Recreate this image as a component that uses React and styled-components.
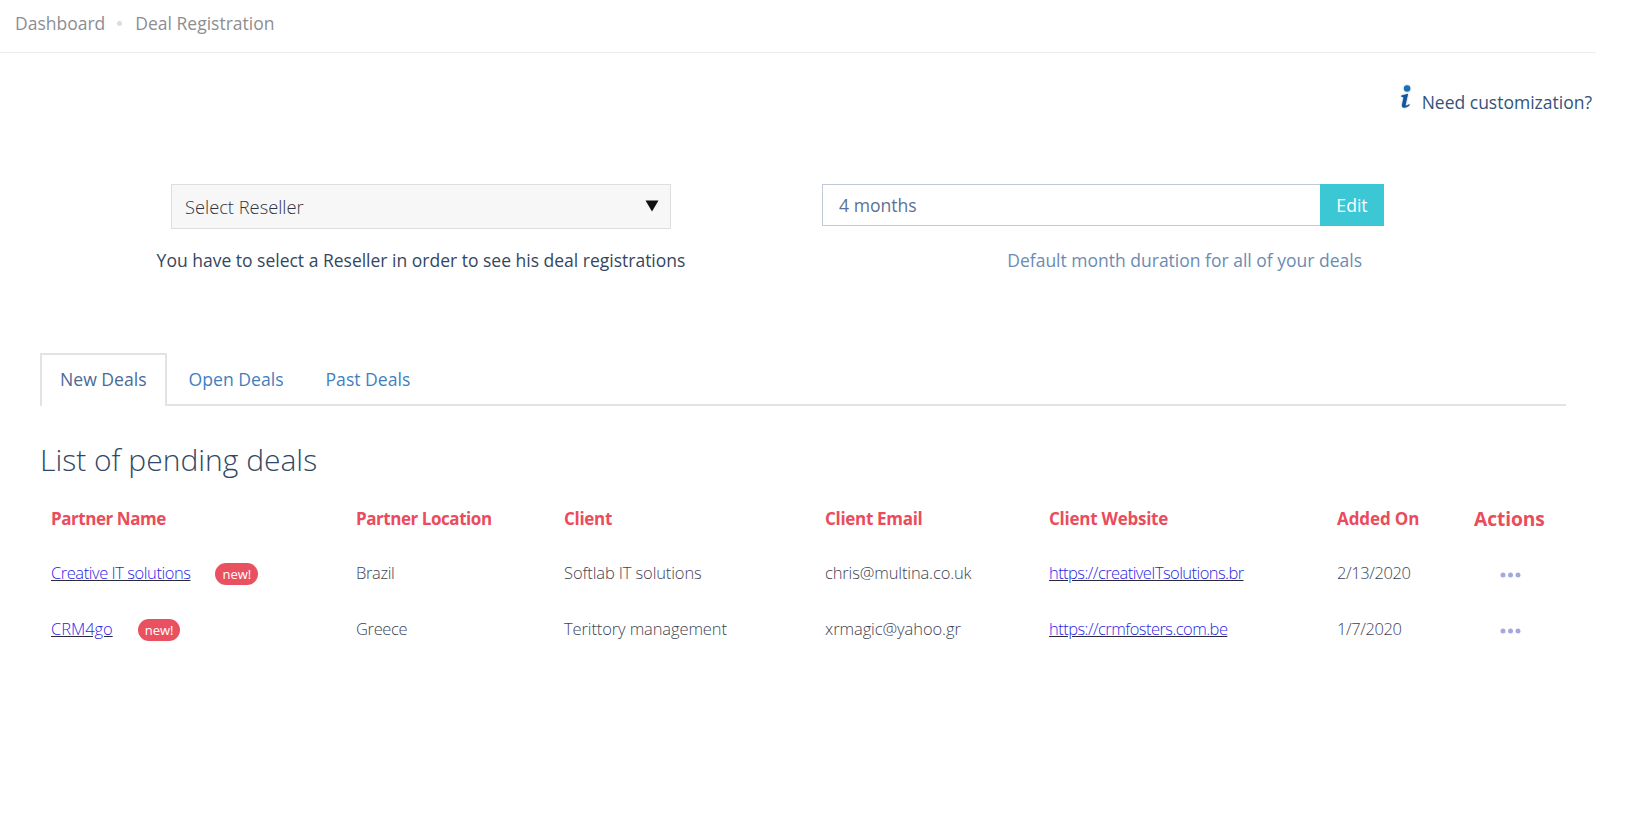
import React from "react";
import styled, { createGlobalStyle } from "styled-components";

const Global = createGlobalStyle`
  html, body { margin: 0; padding: 0; background: #fff; }
  body { font-family: "Open Sans", "Noto Sans", sans-serif; color: #3f4a5f; overflow: hidden; }
`;

const Page = styled.div`
  width: 1596px;
  height: 822px;
`;

const Breadcrumb = styled.nav`
  height: 53px;
  box-sizing: border-box;
  border-bottom: 1px solid #e9edf2;
  display: flex;
  align-items: center;
  padding: 0 0 6px 15px;
  font-size: 17.5px;
  color: #8d8d92;
`;

const Dot = styled.span`
  width: 5px;
  height: 5px;
  border-radius: 50%;
  background: #dcdcdf;
  margin: 1px 13px 0 12px;
`;

const HelpRow = styled.div`
  display: flex;
  justify-content: flex-end;
  align-items: flex-end;
  height: 61px;
  margin-right: 4px;
  font-size: 17.5px;
  color: #34527c;
  gap: 9px;
`;

const HelpText = styled.span`
  line-height: 24px;
`;

const InfoIcon = styled.svg`
  width: 15px;
  height: 28px;
  margin-bottom: 3px;
  filter: drop-shadow(0 0 1px rgba(90, 100, 120, 0.45));
`;

const Controls = styled.section`
  display: flex;
  margin-top: 70px;
  height: 169px;
`;

const ResellerCol = styled.div`
  margin-left: 156px;
  width: 530px;
  display: flex;
  flex-direction: column;
  align-items: center;
`;

const SelectBox = styled.div`
  width: 500px;
  height: 45px;
  box-sizing: border-box;
  background: #f7f7f7;
  border: 1px solid #dedede;
  display: flex;
  align-items: center;
  justify-content: space-between;
  padding: 0 11px 0 13px;
  font-size: 18.3px;
  font-weight: 300;
  color: #2f3542;
`;

const Caret = styled.svg`
  width: 14px;
  height: 12px;
  margin-bottom: 2px;
`;

const Hint = styled.p`
  margin: 19px 0 0;
  font-size: 17.5px;
  line-height: 25px;
  white-space: nowrap;
  color: ${(p) => p.$color};
  text-align: center;
`;

const DurationCol = styled.div`
  margin-left: 136px;
  width: 562px;
  display: flex;
  flex-direction: column;
  align-items: stretch;
`;

const InputGroup = styled.div`
  display: flex;
  height: 42px;
`;

const DurationInput = styled.div`
  flex: 1;
  box-sizing: border-box;
  border: 1px solid #c2cad8;
  border-right: 0;
  display: flex;
  align-items: center;
  padding: 0 16px;
  font-size: 17.6px;
  color: #5b7195;
`;

const EditButton = styled.button`
  width: 64px;
  border: 0;
  background: #3bc7d4;
  color: #fff;
  font: inherit;
  font-size: 17.6px;
  padding: 0;
`;

const DurationHint = styled(Hint)`
  margin-top: 22px;
  text-align: right;
  margin-right: 22px;
`;

const Tabs = styled.div`
  margin: 0 30px 0 40px;
  display: flex;
  height: 53px;
  box-sizing: border-box;
  border-bottom: 2px solid #e3e3e3;
  font-size: 17.6px;
`;

const Tab = styled.div`
  box-sizing: border-box;
  height: ${(p) => (p.$active ? "53px" : "51px")};
  padding: ${(p) => (p.$active ? "0 18px 3px" : "0 21px")};
  margin-right: ${(p) => (p.$active ? "1px" : "0")};
  display: flex;
  align-items: center;
  color: ${(p) => (p.$active ? "#4a6a96" : "#3f7fc1")};
  background: #fff;
  border: ${(p) => (p.$active ? "2px solid #e3e3e3" : "0")};
  border-bottom: 0;
`;

const Heading = styled.h2`
  margin: 33px 0 0 40px;
  font-size: 30px;
  line-height: 42px;
  font-weight: 300;
  color: #2f4865;
`;

const Table = styled.table`
  margin: 12px 0 0 40px;
  border-collapse: collapse;
  table-layout: fixed;
  width: 1525px;
`;

const Th = styled.th`
  text-align: left;
  padding: 0 0 0 11px;
  height: 51px;
  font-family: "Open Sans", sans-serif;
  font-size: ${(p) => (p.$big ? "19.2px" : "17px")};
  font-weight: 700;
  letter-spacing: ${(p) => p.$ls}px;
  color: #ea4c5c;
`;

const Td = styled.td`
  padding: 0 0 0 11px;
  height: 56px;
  font-size: 16.5px;
  font-weight: 300;
  letter-spacing: ${(p) => p.$ls ?? -0.35}px;
  color: #3e4454;
`;

const PartnerCell = styled.div`
  display: flex;
  align-items: center;
`;

const CellLink = styled.a`
  color: #2a1fe8;
  text-decoration-color: #2a2a3a;
  text-decoration-line: underline;
  letter-spacing: ${(p) => p.$ls}px;
`;

const Badge = styled.span`
  margin: 3px 0 0 25px;
  padding: 0 7px;
  height: 22px;
  line-height: 22px;
  border-radius: 11px;
  background: #ea5160;
  color: #fff;
  font-size: 13px;
  font-weight: 400;
  letter-spacing: 0;
`;

const Dots = styled.svg`
  display: block;
  width: 21px;
  height: 6px;
  margin: 5px 0 0 26px;
`;

const columns = [
  ["Partner Name", 305, -0.45],
  ["Partner Location", 208, -0.45],
  ["Client", 261, -0.3],
  ["Client Email", 224, -0.3],
  ["Client Website", 288, -0.25],
  ["Added On", 137, -0.1],
  ["Actions", 102, -0.1],
];

const rows = [
  { partner: "Creative IT solutions", partnerLs: -0.45, loc: "Brazil", client: "Softlab IT solutions", email: "chris@multina.co.uk", emailLs: -0.13, site: "https://creativeITsolutions.br", siteLs: -0.57, date: "2/13/2020" },
  { partner: "CRM4go", partnerLs: -0.05, loc: "Greece", client: "Terittory management", email: "xrmagic@yahoo.gr", emailLs: -0.08, site: "https://crmfosters.com.be", siteLs: -0.55, date: "1/7/2020" },
];

export default function App() {
  return (
    <Page>
      <Global />
      <Breadcrumb>
        <span>Dashboard</span>
        <Dot />
        <span>Deal Registration</span>
      </Breadcrumb>
      <HelpRow>
        <InfoIcon viewBox="0 0 14 26">
          <circle cx="8.5" cy="5" r="3" fill="#1670c0" />
          <path d="M3 11.5 L9.5 10 L7.2 20 C7 21.3 8 21.4 10.5 19.5 L11 20.5 C8.5 23.5 3.2 24.5 3.6 20.5 L5 14 C5.2 13 4.4 12.8 3.2 13 Z" fill="#10569c" />
        </InfoIcon>
        <HelpText>Need customization?</HelpText>
      </HelpRow>
      <Controls>
        <ResellerCol>
          <SelectBox>
            <span>Select Reseller</span>
            <Caret viewBox="0 0 14 12"><path d="M0.5 0.5 H13.5 L7 11.5 Z" fill="#111" /></Caret>
          </SelectBox>
          <Hint $color="#35465f">You have to select a Reseller in order to see his deal registrations</Hint>
        </ResellerCol>
        <DurationCol>
          <InputGroup>
            <DurationInput>4 months</DurationInput>
            <EditButton>Edit</EditButton>
          </InputGroup>
          <DurationHint $color="#6b8bb3">Default month duration for all of your deals</DurationHint>
        </DurationCol>
      </Controls>
      <Tabs>
        <Tab $active>New Deals</Tab>
        <Tab>Open Deals</Tab>
        <Tab>Past Deals</Tab>
      </Tabs>
      <Heading>List of pending deals</Heading>
      <Table>
        <colgroup>
          {columns.map(([name, w]) => <col key={name} width={w} />)}
        </colgroup>
        <thead>
          <tr>
            {columns.map(([name, , ls], i) => <Th key={name} $big={i === 6} $ls={ls}>{name}</Th>)}
          </tr>
        </thead>
        <tbody>
          {rows.map((r) => (
            <tr key={r.partner}>
              <Td>
                <PartnerCell>
                  <CellLink href="#" $ls={r.partnerLs}>{r.partner}</CellLink>
                  <Badge>new!</Badge>
                </PartnerCell>
              </Td>
              <Td>{r.loc}</Td>
              <Td $ls={-0.12}>{r.client}</Td>
              <Td $ls={r.emailLs}>{r.email}</Td>
              <Td><CellLink href="#" $ls={r.siteLs}>{r.site}</CellLink></Td>
              <Td $ls={-0.4}>{r.date}</Td>
              <Td>
                <Dots viewBox="0 0 21 6">
                  <circle cx="3" cy="3" r="2.5" fill="#a3a8e0" />
                  <circle cx="10.5" cy="3" r="2.5" fill="#a3a8e0" />
                  <circle cx="18" cy="3" r="2.5" fill="#a3a8e0" />
                </Dots>
              </Td>
            </tr>
          ))}
        </tbody>
      </Table>
    </Page>
  );
}
